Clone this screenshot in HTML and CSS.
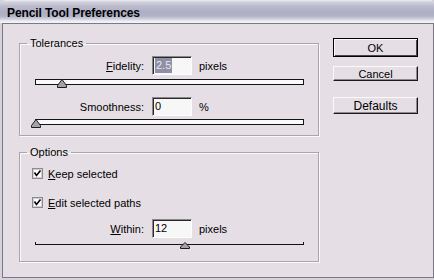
FILE: index.html
```html
<!DOCTYPE html>
<html>
<head>
<meta charset="utf-8">
<link rel="stylesheet" href="styles.css">
</head>
<body>
<div class="window">
  <div class="titlebar"><span class="title">Pencil Tool Preferences</span></div>
  <div class="client">
    <div class="groups">
      <fieldset class="group g1">
        <legend>Tolerances</legend>
        <div class="row first">
          <span class="lbl"><u>F</u>idelity:</span>
          <span class="input"><span class="sel">2.5</span></span>
          <span class="unit">pixels</span>
        </div>
        <div class="slider boxed">
          <div class="track"></div>
          <svg class="thumb" style="left:22px" width="10" height="9" viewBox="0 0 10 9"><polygon points="0.5,8.5 0.5,6.5 5,0.5 9.5,6.5 9.5,8.5" fill="#a6a1a6" stroke="#1e1e1e" stroke-width="1"/></svg>
        </div>
        <div class="row second">
          <span class="lbl">Smoothness:</span>
          <span class="input"><span class="val">0</span></span>
          <span class="unit">%</span>
        </div>
        <div class="slider boxed last">
          <div class="track"></div>
          <svg class="thumb" style="left:-4px" width="10" height="9" viewBox="0 0 10 9"><polygon points="0.5,8.5 0.5,6.5 5,0.5 9.5,6.5 9.5,8.5" fill="#a6a1a6" stroke="#1e1e1e" stroke-width="1"/></svg>
        </div>
      </fieldset>
      <fieldset class="group g2">
        <legend>Options</legend>
        <div class="check c1">
          <svg class="box" width="11" height="11" viewBox="0 0 11 11"><rect x="0.5" y="0.5" width="10" height="10" fill="#fff" stroke="#8e8a8e"/><rect x="1.5" y="1.5" width="8" height="8" fill="none" stroke="#d0ccd0"/><polyline points="2.5,4.5 4.5,7.5 8.5,2.5" fill="none" stroke="#000" stroke-width="1.6"/></svg>
          <span class="ctext"><u>K</u>eep selected</span>
        </div>
        <div class="check c2">
          <svg class="box" width="11" height="11" viewBox="0 0 11 11"><rect x="0.5" y="0.5" width="10" height="10" fill="#fff" stroke="#8e8a8e"/><rect x="1.5" y="1.5" width="8" height="8" fill="none" stroke="#d0ccd0"/><polyline points="2.5,4.5 4.5,7.5 8.5,2.5" fill="none" stroke="#000" stroke-width="1.6"/></svg>
          <span class="ctext"><u>E</u>dit selected paths</span>
        </div>
        <div class="row third">
          <span class="lbl"><u>W</u>ithin:</span>
          <span class="input"><span class="val">12</span></span>
          <span class="unit">pixels</span>
        </div>
        <div class="slider lined">
          <div class="line"></div>
          <svg class="thumb" style="left:145px;top:2px" width="10" height="7" viewBox="0 0 10 7"><polygon points="0.5,6.5 0.5,5 5,0.5 9.5,5 9.5,6.5" fill="#a6a1a6" stroke="#1e1e1e" stroke-width="1"/></svg>
        </div>
      </fieldset>
    </div>
    <div class="buttons">
      <div class="btn default">OK</div>
      <div class="btn cancel">Cancel</div>
      <div class="btn defaults">Defaults</div>
    </div>
  </div>
</div>
</body>
</html>
```

FILE: styles.css
```css
* { box-sizing: border-box; }
html, body { margin: 0; padding: 0; }
body {
  width: 434px;
  height: 280px;
  overflow: hidden;
  font-family: "Liberation Sans", Arial, sans-serif;
  font-size: 11px;
  color: #000;
  background: #d6d2da;
}
.window {
  width: 434px;
  height: 280px;
  display: flex;
  flex-direction: column;
}
.titlebar {
  height: 23px;
  flex: none;
  border-top-left-radius: 6px;
  border-top-right-radius: 4px;
  background: linear-gradient(#eeeef4 0px, #d2d2de 2px, #bcbccd 6px, #aeaec4 12px, #b2b2c6 16px, #cfcfdc 19px, #ececf2 21px, #f4f4f8 23px);
  padding: 6px 0 0 7px;
}
.title {
  display: block;
  font-size: 12px;
  font-weight: bold;
  letter-spacing: -0.1px;
  color: #000;
}
.client {
  margin-left: 2px;
  width: 432px;
  height: 255px;
  flex: none;
  background: #e5dfe5;
  border: 1px solid #7c7888;
  display: flex;
}
.groups {
  margin-left: 16px;
  padding-top: 13px;
  width: 300px;
  display: flex;
  flex-direction: column;
}
.group {
  margin: 0;
  padding: 0;
  min-width: 0;
  width: 300px;
  border: 1px solid #a9a5ab;
  box-shadow: inset 1px 1px 0 #fbf9fb, 1px 1px 0 #fbf9fb;
}
.group legend {
  margin-left: 7px;
  padding: 0 3px;
  line-height: 13px;
  height: 13px;
}
.g1 { padding-bottom: 7px; }
.g2 { margin-top: 10px; padding-bottom: 12px; }
.row {
  display: flex;
  align-items: center;
  height: 19px;
}
.row.first { margin-top: 6px; }
.row.second { margin-top: 9px; }
.row.third { margin-top: 10px; }
.lbl {
  width: 124px;
  text-align: right;
}
.input {
  margin-left: 8px;
  width: 40px;
  height: 19px;
  background: #f8f7f8;
  border-top: 1px solid #8a868a;
  border-left: 1px solid #8a868a;
  border-right: 1px solid #fdfdfd;
  border-bottom: 1px solid #fdfdfd;
  box-shadow: inset 1px 1px 0 #2a2a2a;
  display: flex;
  align-items: center;
  padding-left: 2px;
}
.sel {
  background: #8f8fa6;
  color: #e8e8f0;
  padding: 1px 1px;
  line-height: 13px;
}
.val { line-height: 13px; }
.unit { margin-left: 7px; }
.slider {
  position: relative;
  margin-left: 15px;
  width: 269px;
  height: 9px;
  margin-top: 4px;
}
.slider.last { margin-top: 3px; }
.slider .track {
  height: 6px;
  background: #fbfafb;
  border: 1px solid #141414;
}
.slider.lined { margin-top: 2px; }
.slider .line {
  position: relative;
  top: 2px;
  height: 3px;
  border-left: 1px solid #141414;
  border-right: 1px solid #141414;
  border-bottom: 1px solid #141414;
}
.thumb {
  position: absolute;
  top: 0;
  display: block;
}
.check {
  display: flex;
  align-items: center;
  height: 13px;
  margin-left: 12px;
}
.check .box { flex: none; display: block; }
.ctext { margin-left: 5px; }
.c1 { margin-top: 8px; }
.c2 { margin-top: 16px; }
.buttons {
  margin-left: 14px;
  padding-top: 14px;
  width: 85px;
  display: flex;
  flex-direction: column;
}
.btn {
  display: flex;
  align-items: center;
  justify-content: center;
  background: #e5dfe5;
  border-top: 1px solid #fbfafb;
  border-left: 1px solid #fbfafb;
  border-right: 1px solid #1a1a1a;
  border-bottom: 1px solid #1a1a1a;
  box-shadow: inset -1px -1px 0 #8e8a8e;
}
.btn.default {
  height: 19px;
  border: 1px solid #000;
  box-shadow: inset 1px 1px 0 #fbfafb, inset -1px -1px 0 #4a464a;
}
.btn.cancel { height: 15px; margin-top: 9px; }
.btn.defaults { height: 17px; margin-top: 16px; font-size: 12px; }
```
